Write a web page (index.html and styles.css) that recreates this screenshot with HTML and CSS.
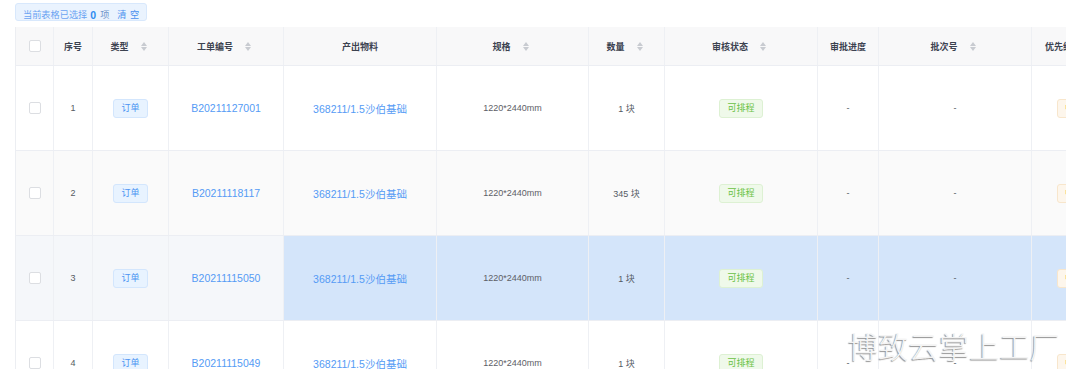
FILE: index.html
```html
<!DOCTYPE html>
<html lang="zh-CN">
<head>
<meta charset="utf-8">
<title>工单列表</title>
<link rel="stylesheet" href="styles.css">
</head>
<body>
<div class="page">
  <div class="selbar">
    <span class="sel-text">当前表格已选择</span>
    <span class="sel-num">0</span>
    <span class="sel-unit">项</span>
    <span class="sel-clear">清&nbsp;空</span>
  </div>
  <table class="grid">
    <colgroup>
      <col class="c-chk"><col class="c-idx"><col class="c-type"><col class="c-no">
      <col class="c-mat"><col class="c-spec"><col class="c-qty"><col class="c-audit">
      <col class="c-prog"><col class="c-batch"><col class="c-pri">
    </colgroup>
    <thead>
      <tr>
        <th><span class="chk"></span></th>
        <th>序号</th>
        <th>类型<span class="sort"><i class="up"></i><i class="down"></i></span></th>
        <th>工单编号<span class="sort"><i class="up"></i><i class="down"></i></span></th>
        <th>产出物料</th>
        <th>规格<span class="sort"><i class="up"></i><i class="down"></i></span></th>
        <th>数量<span class="sort"><i class="up"></i><i class="down"></i></span></th>
        <th>审核状态<span class="sort"><i class="up"></i><i class="down"></i></span></th>
        <th>审批进度</th>
        <th>批次号<span class="sort"><i class="up"></i><i class="down"></i></span></th>
        <th>优先级<span class="sort"><i class="up"></i><i class="down"></i></span></th>
      </tr>
    </thead>
    <tbody>
      <tr>
        <td><span class="chk"></span></td>
        <td>1</td>
        <td><span class="tag tag-blue">订单</span></td>
        <td><span class="link">B20211127001</span></td>
        <td><span class="link">368211/1.5沙伯基础</span></td>
        <td class="spec">1220*2440mm</td>
        <td>1 块</td>
        <td><span class="tag tag-green">可排程</span></td>
        <td>-</td>
        <td>-</td>
        <td><span class="tag tag-orange">中</span></td>
      </tr>
      <tr class="stripe">
        <td><span class="chk"></span></td>
        <td>2</td>
        <td><span class="tag tag-blue">订单</span></td>
        <td><span class="link">B20211118117</span></td>
        <td><span class="link">368211/1.5沙伯基础</span></td>
        <td class="spec">1220*2440mm</td>
        <td>345 块</td>
        <td><span class="tag tag-green">可排程</span></td>
        <td>-</td>
        <td>-</td>
        <td><span class="tag tag-orange">中</span></td>
      </tr>
      <tr class="hover">
        <td><span class="chk"></span></td>
        <td>3</td>
        <td><span class="tag tag-blue">订单</span></td>
        <td><span class="link">B20211115050</span></td>
        <td class="hl"><span class="link">368211/1.5沙伯基础</span></td>
        <td class="hl spec">1220*2440mm</td>
        <td class="hl">1 块</td>
        <td class="hl"><span class="tag tag-green">可排程</span></td>
        <td class="hl">-</td>
        <td class="hl">-</td>
        <td class="hl"><span class="tag tag-orange">中</span></td>
      </tr>
      <tr>
        <td><span class="chk"></span></td>
        <td>4</td>
        <td><span class="tag tag-blue">订单</span></td>
        <td><span class="link">B20211115049</span></td>
        <td><span class="link">368211/1.5沙伯基础</span></td>
        <td class="spec">1220*2440mm</td>
        <td>1 块</td>
        <td><span class="tag tag-green">可排程</span></td>
        <td>-</td>
        <td>-</td>
        <td><span class="tag tag-orange">中</span></td>
      </tr>
    </tbody>
  </table>
  <div class="watermark">博致云掌上工厂</div>
</div>
</body>
</html>
```
FILE: styles.css
```css
html, body {
  margin: 0;
  padding: 0;
  background: #fff;
  overflow: hidden;
}
body {
  font-family: "Liberation Sans", "Noto Sans CJK SC", sans-serif;
  color: #606266;
}
.page {
  position: relative;
  width: 1066px;
  height: 369px;
  padding: 3px 0 0 15px;
  box-sizing: border-box;
  overflow: hidden;
}
.selbar {
  width: 132px;
  height: 18px;
  box-sizing: border-box;
  background: #eaf3fe;
  border: 1px solid #d8e8fc;
  border-radius: 3px;
  display: flex;
  align-items: center;
  padding: 5px 0 0 7px;
  font-size: 9.2px;
  line-height: 12px;
  color: #6aa3f2;
  white-space: nowrap;
}
.sel-num {
  font-size: 10.5px;
  font-weight: bold;
  color: #2d8cf0;
  margin-left: 3px;
}
.sel-unit {
  margin-left: 4px;
  color: #6f94c9;
}
.sel-clear {
  margin-left: 8px;
  color: #4a90ee;
  word-spacing: 1px;
}
.grid {
  margin-top: 6px;
  table-layout: fixed;
  border-collapse: collapse;
  width: 1092px;
  border-left: 1px solid #eceef2;
}
.c-chk { width: 38px; }
.c-idx { width: 39px; }
.c-type { width: 76px; }
.c-no { width: 115px; }
.c-mat { width: 153px; }
.c-spec { width: 152px; }
.c-qty { width: 76px; }
.c-audit { width: 153px; }
.c-prog { width: 61px; }
.c-batch { width: 153px; }
.c-pri { width: 76px; }
th, td {
  padding: 0;
  text-align: center;
  vertical-align: middle;
  border-right: 1px solid #eef0f4;
  border-bottom: 1px solid #eceef3;
  white-space: nowrap;
  overflow: hidden;
}
th {
  height: 38px;
  background: #f8f8f9;
  font-size: 9px;
  font-weight: bold;
  color: #3c4250;
}
td {
  height: 84px;
  font-size: 9px;
  color: #555a63;
}
tr.stripe td { background: #fafafa; }
tr.hover td { background: #f5f7fa; }
tr.hover td.hl { background: #d4e5fa; }
td.spec { color: #5d6066; }
.chk {
  display: inline-block;
  width: 10px;
  height: 10px;
  border: 1px solid #dcdee2;
  border-radius: 2px;
  background: #fff;
  vertical-align: middle;
}
.sort {
  display: inline-flex;
  flex-direction: column;
  align-items: center;
  justify-content: center;
  gap: 1px;
  width: 14px;
  margin-left: 8px;
  vertical-align: middle;
  position: relative;
  top: -1px;
}
.sort i {
  display: block;
  width: 0;
  height: 0;
  border-left: 3.3px solid transparent;
  border-right: 3.3px solid transparent;
}
.sort .up { border-bottom: 4.2px solid #c8cbd1; }
.sort .down { border-top: 4.2px solid #c8cbd1; }
.link {
  font-size: 10.5px;
  color: #559bf5;
}
.tag {
  display: inline-block;
  font-size: 9px;
  line-height: 17px;
  height: 17px;
  padding: 0 7px;
  border-radius: 3px;
  border: 1px solid;
  vertical-align: middle;
}
.tag-blue {
  color: #4b93f2;
  background: #e8f3ff;
  border-color: #d3e6fd;
}
.tag-green {
  color: #6ac144;
  background: #eff9ea;
  border-color: #ddf1d3;
}
.tag-orange {
  color: #e6a23c;
  background: #fdf6ec;
  border-color: #f8e6cc;
}
.watermark {
  position: absolute;
  left: 848px;
  top: 326px;
  font-family: "Noto Sans CJK SC", sans-serif;
  font-size: 30px;
  line-height: 38px;
  letter-spacing: 0.3px;
  color: #f4f4f4;
  text-shadow: -1px 1px 1px #8f8f8f;
  white-space: nowrap;
  font-weight: 300;
}
```
